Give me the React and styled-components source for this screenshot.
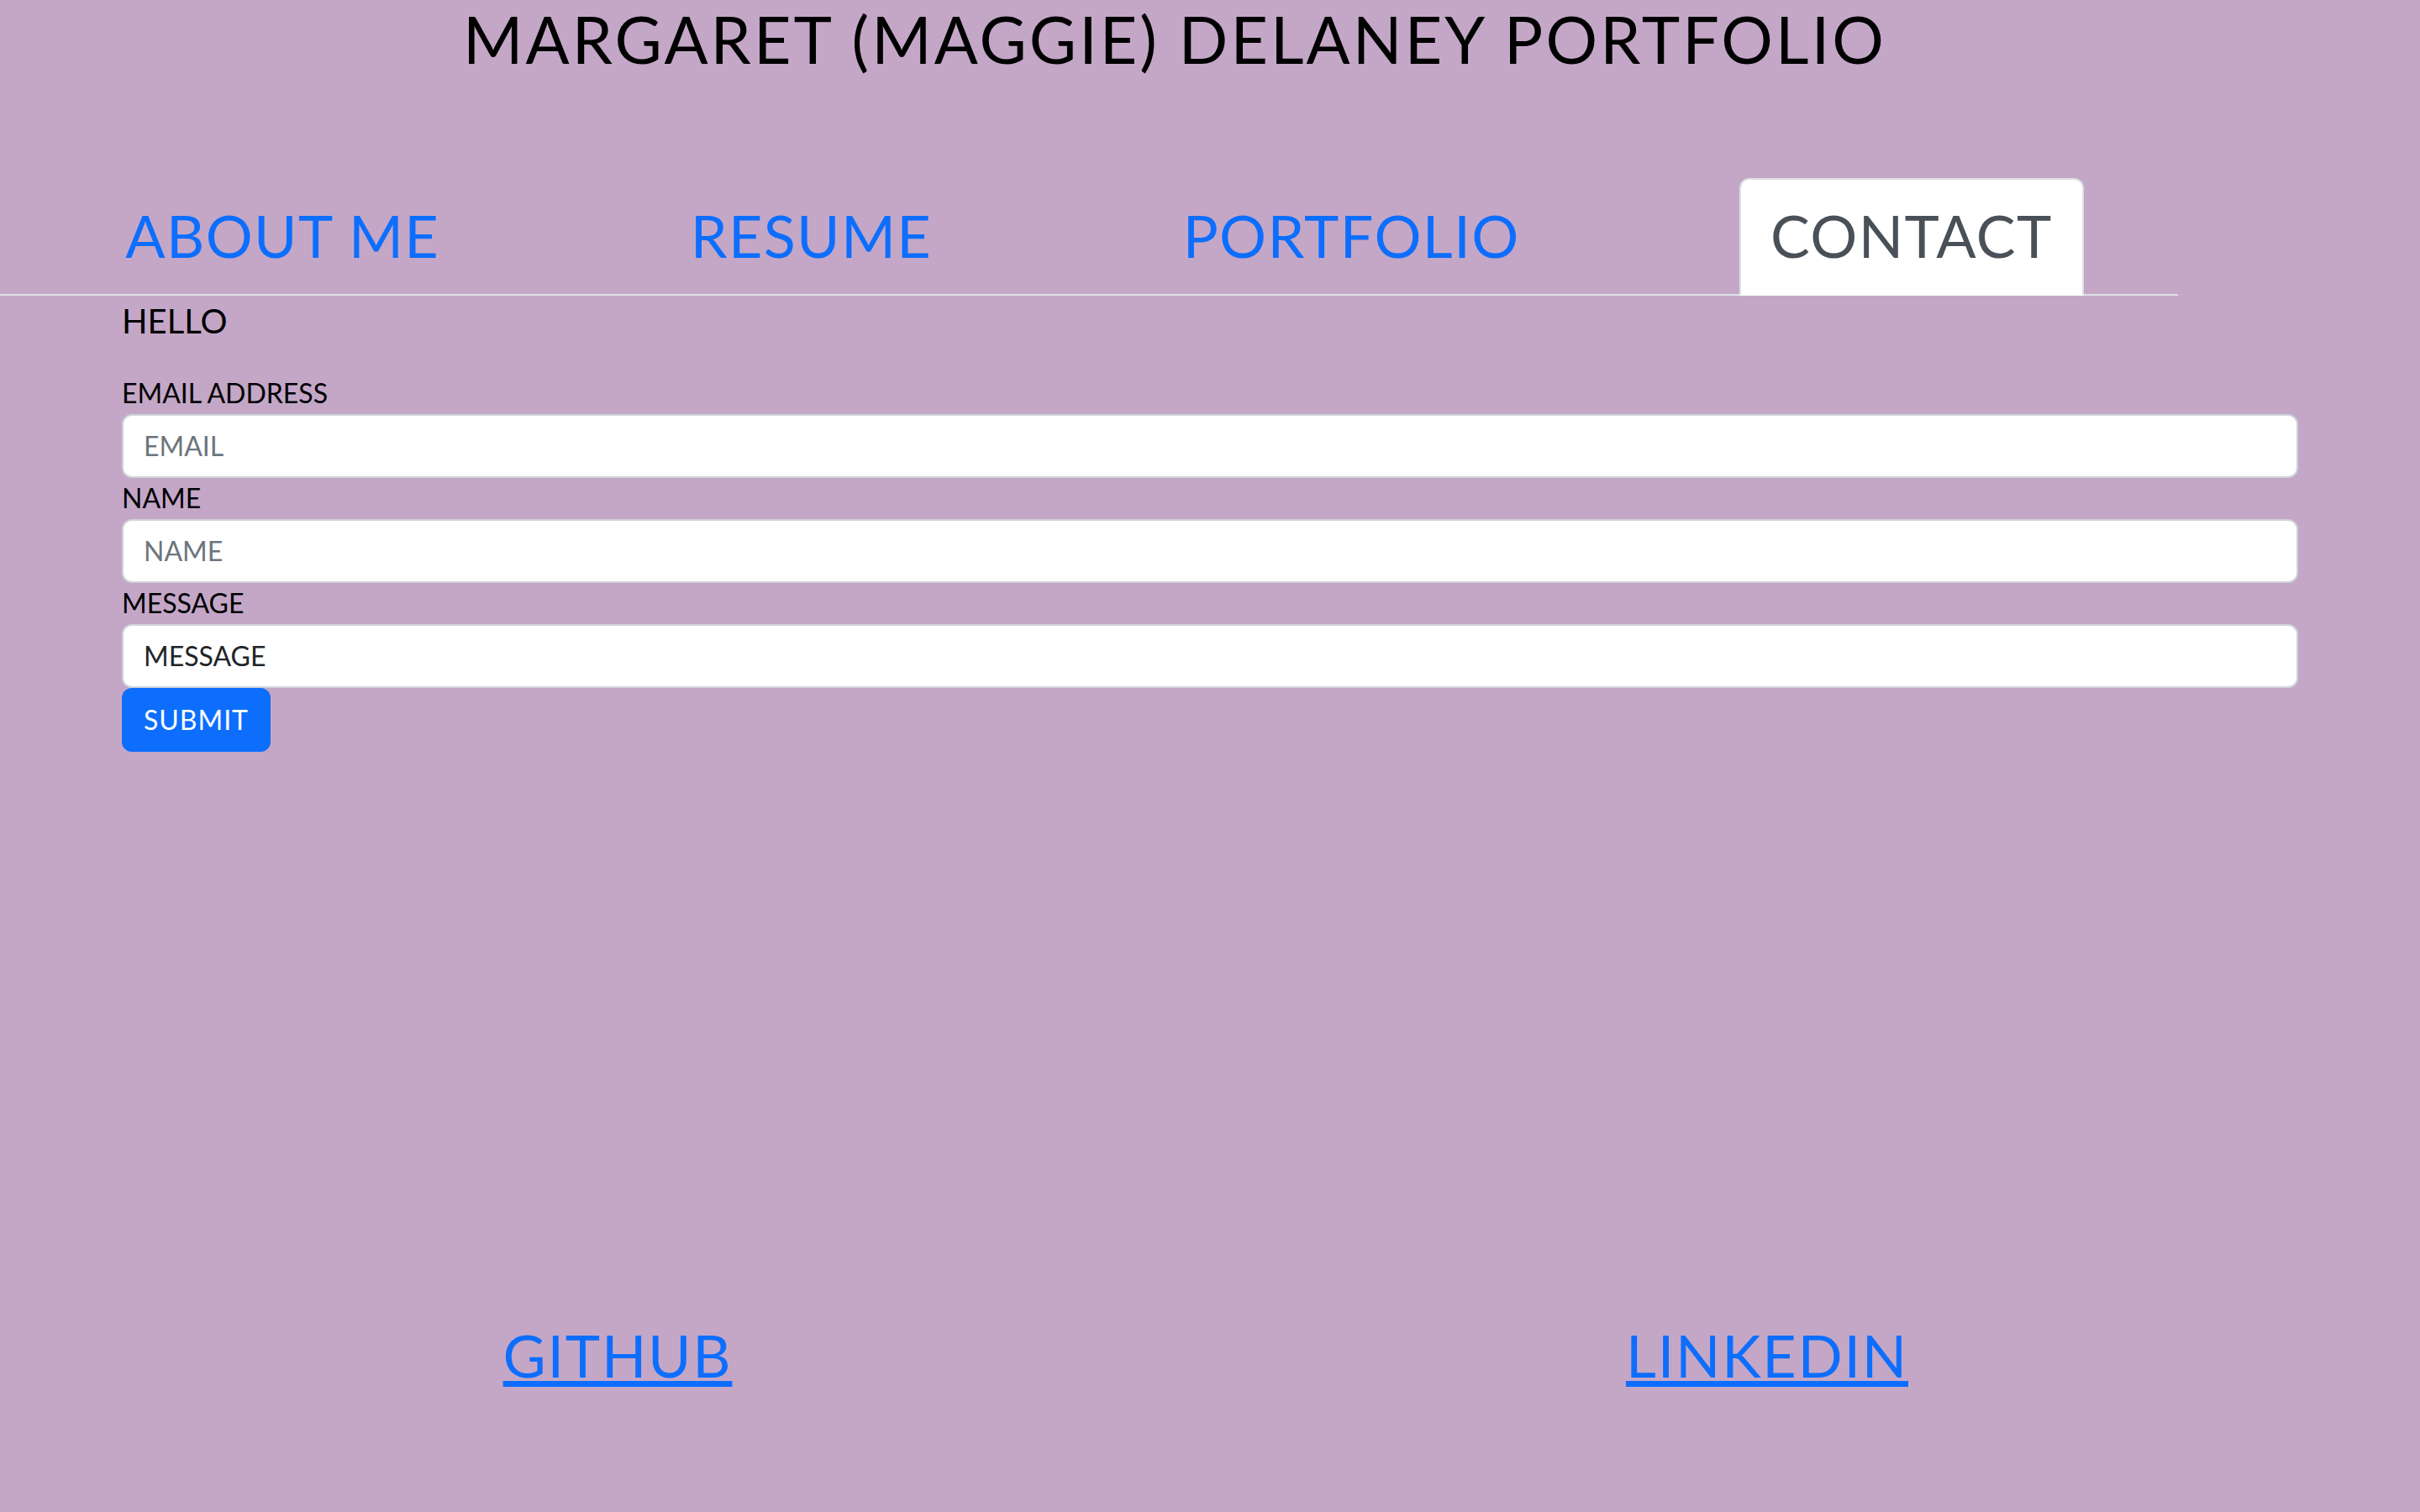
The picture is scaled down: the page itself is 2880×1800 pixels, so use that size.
import React from 'react';
import styled, { createGlobalStyle } from 'styled-components';

const GlobalStyle = createGlobalStyle`
  html, body {
    margin: 0;
    padding: 0;
  }
  body {
    background-color: #c4a7c7;
    font-family: "Lato", "Open Sans", sans-serif;
    color: #000;
  }
  * {
    box-sizing: border-box;
  }
`;

const tabs = ['About Me', 'Resume', 'Portfolio', 'Contact'];

const App = () => {
    return (
        <>
            <GlobalStyle />
            <Page>
                <Title>Margaret (Maggie) Delaney Portfolio</Title>
                <Nav>
                    {tabs.map(tab => (
                        <Tab key={tab} $active={tab === 'Contact'} href="#">
                            {tab}
                        </Tab>
                    ))}
                </Nav>
                <Content>
                    <Hello>Hello</Hello>
                    <Form onSubmit={e => e.preventDefault()}>
                        <Label htmlFor="email">Email address</Label>
                        <Input id="email" type="email" placeholder="Email" />
                        <Label htmlFor="name">Name</Label>
                        <Input id="name" type="text" placeholder="Name" />
                        <Label htmlFor="message">Message</Label>
                        <Input id="message" type="text" defaultValue="Message" />
                        <SubmitButton type="submit">Submit</SubmitButton>
                    </Form>
                </Content>
                <Footer>
                    <FooterLink href="#">Github</FooterLink>
                    <FooterLink href="#">LinkedIn</FooterLink>
                </Footer>
            </Page>
        </>
    );
};

export default App;

const Page = styled.div`
  min-height: 100vh;
  display: flex;
  flex-direction: column;
  text-transform: uppercase;
`;

const Title = styled.h1`
  margin: 0;
  padding-right: 84px;
  font-size: 77px;
  font-weight: 400;
  line-height: 1.2;
  text-align: center;
  letter-spacing: 0.04em;
`;

const Nav = styled.nav`
  width: 90%;
  margin-top: 120px;
  display: flex;
  justify-content: space-around;
  border-bottom: 2px solid #dee2e6;
`;

const Tab = styled.a`
  display: block;
  margin-bottom: -2px;
  padding: 24px 35px 28px;
  font-size: 70px;
  line-height: 1.2;
  letter-spacing: 0.02em;
  text-decoration: none;
  color: ${props => (props.$active ? '#495057' : '#0d6efd')};
  background-color: ${props => (props.$active ? '#fff' : 'transparent')};
  border: 2px solid ${props => (props.$active ? '#dee2e6' : 'transparent')};
  border-bottom-color: ${props => (props.$active ? '#fff' : 'transparent')};
  border-radius: 12px 12px 0 0;
`;

const Content = styled.main`
  padding: 0 145px;
`;

const Hello = styled.p`
  margin: 0 0 32px;
  font-size: 40px;
  line-height: 1.5;
`;

const Form = styled.form`
  display: flex;
  flex-direction: column;
  align-items: flex-start;
`;

const Label = styled.label`
  display: block;
  margin-bottom: 1px;
  font-size: 32px;
  line-height: 1.5;
`;

const Input = styled.input`
  width: 100%;
  padding: 12px 24px;
  font-family: inherit;
  font-size: 32px;
  line-height: 1.5;
  text-transform: uppercase;
  color: #212529;
  background-color: #fff;
  border: 2px solid #ced4da;
  border-radius: 12px;
  outline: none;

  &::placeholder {
    color: #6c757d;
  }
`;

const SubmitButton = styled.button`
  padding: 12px 24px;
  font-family: inherit;
  font-size: 32px;
  line-height: 1.5;
  letter-spacing: 0.03em;
  text-transform: uppercase;
  color: #fff;
  background-color: #0d6efd;
  border: 2px solid #0d6efd;
  border-radius: 12px;
  cursor: pointer;
`;

const Footer = styled.footer`
  margin-top: auto;
  padding: 0 93px 134px 51px;
  display: grid;
  grid-template-columns: 1fr 1fr;
  justify-items: center;
`;

const FooterLink = styled.a`
  font-size: 70px;
  line-height: 1.5;
  letter-spacing: 0.025em;
  color: #0d6efd;
  text-decoration: underline;
  text-decoration-thickness: 7px;
  text-underline-offset: 4px;
`;
